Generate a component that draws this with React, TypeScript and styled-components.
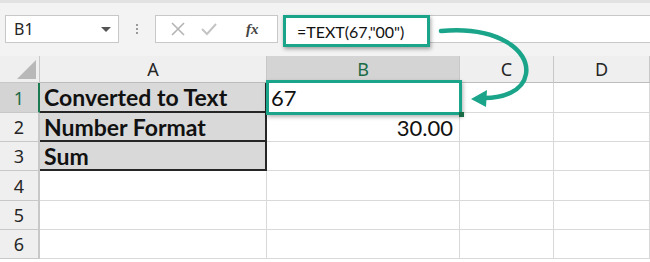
import styled, { createGlobalStyle } from "styled-components";

const Teal = "#1aa58a";

const GlobalStyle = createGlobalStyle`
    body {
        margin: 0;
        background: #ffffff;
    }
`;

const Page = styled.div`
    position: relative;
    width: 650px;
    height: 262px;
    overflow: hidden;
    background: #ffffff;
    font-family: "Noto Sans", "Liberation Sans", sans-serif;
`;

const Toolbar = styled.div`
    height: 56px;
    box-sizing: border-box;
    border-top: 3px solid #e2e2e2;
    background: #f3f3f3;
    display: flex;
    align-items: flex-start;
    padding: 12px 0 0 5px;
`;

const NameBox = styled.div`
    width: 114px;
    height: 28px;
    box-sizing: border-box;
    background: #ffffff;
    border: 1px solid #c8c8c8;
    display: flex;
    align-items: center;
    justify-content: space-between;
    padding: 0 7px 0 8px;
    font-size: 16px;
    color: #262626;
`;

const Caret = styled.span`
    width: 0;
    height: 0;
    border-left: 5px solid transparent;
    border-right: 5px solid transparent;
    border-top: 5px solid #555555;
`;

const Dots = styled.div`
    width: 36px;
    height: 28px;
    display: flex;
    flex-direction: column;
    align-items: center;
    justify-content: center;
    gap: 2px;

    span {
        width: 2px;
        height: 2px;
        background: #9a9a9a;
    }
`;

const ButtonsBox = styled.div`
    width: 123px;
    height: 28px;
    box-sizing: border-box;
    background: #ffffff;
    border: 1px solid #c8c8c8;
    display: flex;
    align-items: center;
    padding: 0 0 0 14px;
    gap: 14px;
`;

const Fx = styled.span`
    margin-left: 14px;
    font-family: "Liberation Serif", serif;
    font-style: italic;
    font-weight: bold;
    font-size: 15px;
    color: #444444;
`;

const FormulaBar = styled.div`
    position: relative;
    flex: 1;
    margin-left: 5px;
    height: 28px;
    box-sizing: border-box;
    background: #ffffff;
    border: 1px solid #c8c8c8;
    border-right: none;
`;

const FormulaHighlight = styled.div`
    position: absolute;
    left: -1px;
    top: -1px;
    width: 147px;
    height: 32px;
    box-sizing: border-box;
    border: 3px solid ${Teal};
    box-shadow: 1px 2px 4px rgba(0, 0, 0, 0.35);
    background: #ffffff;
    display: flex;
    align-items: center;
    padding-left: 11px;
    font-family: "Lato", "Liberation Sans", sans-serif;
    font-size: 16px;
    color: #111111;
`;

const Grid = styled.div`
    display: grid;
    grid-template-columns: 40px 227px 193px 94px 96px;
    grid-template-rows: 27px 30px 29px 29px 30px 29px 29px;
`;

const Corner = styled.div`
    position: relative;
    background: #efefef;
    border-right: 1px solid #c8c8c8;
    border-bottom: 1px solid #c8c8c8;

    &::after {
        content: "";
        position: absolute;
        right: 3px;
        bottom: 3px;
        width: 0;
        height: 0;
        border-left: 19px solid transparent;
        border-bottom: 19px solid #b8b8b8;
    }
`;

const ColHead = styled.div<{ $active?: boolean }>`
    box-sizing: border-box;
    background: ${p => (p.$active ? "#d4d4d4" : "#efefef")};
    border-right: 1px solid #c8c8c8;
    border-bottom: 1px solid #bcbcbc;
    display: flex;
    align-items: center;
    justify-content: center;
    font-size: 18px;
    color: ${p => (p.$active ? "#1b6b47" : "#262626")};
`;

const RowHead = styled.div<{ $active?: boolean }>`
    box-sizing: border-box;
    background: ${p => (p.$active ? "#d4d4d4" : "#efefef")};
    border-right: 2px solid ${p => (p.$active ? "#1b7a50" : "#c8c8c8")};
    border-bottom: 1px solid #c8c8c8;
    display: flex;
    align-items: center;
    justify-content: center;
    font-size: 18px;
    color: ${p => (p.$active ? "#1b6b47" : "#262626")};
`;

const Cell = styled.div<{ $label?: boolean; $right?: boolean }>`
    position: relative;
    box-sizing: border-box;
    display: flex;
    align-items: center;
    justify-content: ${p => (p.$right ? "flex-end" : "flex-start")};
    padding: 0 6px 0 4px;
    background: ${p => (p.$label ? "#d9d9d9" : "#ffffff")};
    border-right: ${p => (p.$label ? "2px solid #262626" : "1px solid #d9d9d9")};
    border-bottom: ${p => (p.$label ? "2px solid #262626" : "1px solid #d9d9d9")};
    font-family: "Lato", "Liberation Sans", sans-serif;
    font-size: ${p => (p.$label ? "23px" : "22px")};
    font-weight: ${p => (p.$label ? 700 : 400)};
    color: #111111;
    white-space: nowrap;
`;

const Selection = styled.div`
    position: absolute;
    z-index: 3;
    left: -1px;
    top: -3px;
    right: -3px;
    bottom: -3px;
    border: 3px solid ${Teal};
    box-shadow: 1px 2px 4px rgba(0, 0, 0, 0.3);
    pointer-events: none;

    &::after {
        content: "";
        position: absolute;
        right: -5px;
        bottom: -5px;
        width: 5px;
        height: 5px;
        background: #1b6b47;
    }
`;

const Arrow = styled.svg`
    position: absolute;
    z-index: 4;
    left: 0;
    top: 0;
    pointer-events: none;
`;

const labels = ["Converted to Text", "Number Format", "Sum"];
const bValues: Record<number, string> = { 2: "30.00" };

export default function App() {
    const rows = [1, 2, 3, 4, 5, 6];
    return (
        <Page>
            <GlobalStyle />
            <Toolbar>
                <NameBox>
                    B1
                    <Caret />
                </NameBox>
                <Dots>
                    <span />
                    <span />
                    <span />
                </Dots>
                <ButtonsBox>
                    <svg width="16" height="16" viewBox="0 0 16 16">
                        <path d="M2 2 L14 14 M14 2 L2 14" stroke="#b4b4b4" strokeWidth="1.6" fill="none" />
                    </svg>
                    <svg width="18" height="16" viewBox="0 0 18 16">
                        <path d="M2 8 L7 13 L16 3" stroke="#c4c4c4" strokeWidth="2" fill="none" />
                    </svg>
                    <Fx>fx</Fx>
                </ButtonsBox>
                <FormulaBar>
                    <FormulaHighlight>=TEXT(67,"00")</FormulaHighlight>
                </FormulaBar>
            </Toolbar>
            <Grid>
                <Corner />
                <ColHead>A</ColHead>
                <ColHead $active>B</ColHead>
                <ColHead>C</ColHead>
                <ColHead>D</ColHead>
                {rows.map(r => (
                    <>
                        <RowHead key={`h${r}`} $active={r === 1}>{r}</RowHead>
                        <Cell key={`a${r}`} $label={r <= 3}>{labels[r - 1] ?? ""}</Cell>
                        <Cell key={`b${r}`} $right={r !== 1}>
                            {r === 1 ? "67" : bValues[r] ?? ""}
                            {r === 1 && <Selection />}
                        </Cell>
                        <Cell key={`c${r}`} />
                        <Cell key={`d${r}`} />
                    </>
                ))}
            </Grid>
            <Arrow width="650" height="262" viewBox="0 0 650 262">
                <path
                    d="M441 31 C 497 26, 530 50, 526 74 C 523 92, 502 98, 484 98"
                    stroke={Teal}
                    strokeWidth="4.5"
                    strokeLinecap="round"
                    fill="none"
                />
                <path d="M471 99 L487 90 L486 107 Z" fill={Teal} />
            </Arrow>
        </Page>
    );
}
